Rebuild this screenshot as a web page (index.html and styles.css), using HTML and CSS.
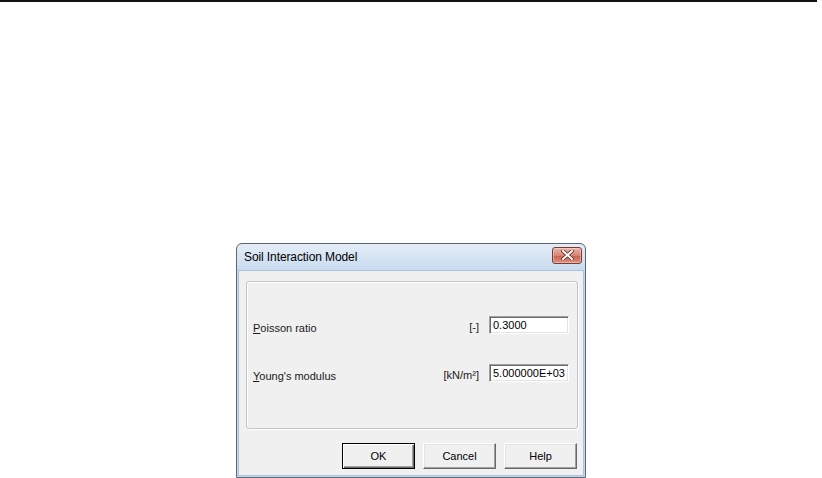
FILE: index.html
```html
<!DOCTYPE html>
<html lang="en">
<head>
    <meta charset="UTF-8">
    <title>Soil Interaction Model</title>
    <link rel="stylesheet" href="styles.css">
</head>
<body>

<div class="top-rule"></div>

<!-- Dialog window -->
<div class="dialog">
    <div class="title-bar">
        <span class="title">Soil Interaction Model</span>
        <button class="close-btn" title="Close">
            <svg width="13" height="10" viewBox="0 0 13 10">
                <path d="M2 1 L11 9 M11 1 L2 9" stroke="#5a2018" stroke-width="3.4" stroke-linecap="square"/>
                <path d="M2 1 L11 9 M11 1 L2 9" stroke="#fff" stroke-width="2" stroke-linecap="square"/>
            </svg>
        </button>
    </div>

    <div class="client">
        <div class="group-box">
            <div class="field-row">
                <label class="field-label" for="poisson"><u>P</u>oisson ratio</label>
                <span class="unit">[-]</span>
                <input class="field-input" type="text" id="poisson" value="0.3000">
            </div>
            <div class="field-row">
                <label class="field-label" for="young"><u>Y</u>oung's modulus</label>
                <span class="unit">[kN/m²]</span>
                <input class="field-input" type="text" id="young" value="5.000000E+03">
            </div>
        </div>

        <div class="button-row">
            <button class="btn btn-default">OK</button>
            <button class="btn">Cancel</button>
            <button class="btn">Help</button>
        </div>
    </div>
</div>

</body>
</html>
```

FILE: styles.css
```css
body {
    margin: 0;
    background-color: #fff;
    font-family: "Liberation Sans", Arial, sans-serif;
    font-size: 11px;
    color: #000;
}

.top-rule {
    width: 817px;
    height: 2px;
    background-color: #111;
}

/* Window frame */
.dialog {
    margin: 241px 0 0 236px;
    width: 346px;
    border: 1px solid #5d6772;
    border-radius: 6px 6px 0 0;
    padding: 0 1px 1px;
    background: linear-gradient(#e3edf8, #c6d8ee 30px, #c6d8ee);
}

.title-bar {
    height: 26px;
    display: flex;
    align-items: center;
    justify-content: space-between;
    padding: 0 2px 0 6px;
}

.title {
    font-size: 12px;
    letter-spacing: -0.1px;
    color: #000;
    margin-top: -1px;
}

.close-btn {
    width: 30px;
    height: 17px;
    margin-top: -4px;
    padding: 0;
    border: 1px solid #7a3a30;
    border-radius: 3px;
    background: linear-gradient(#eab3a7, #d68373 50%, #c9604b 51%, #dc9282);
    box-shadow: inset 0 0 0 1px rgba(255, 255, 255, 0.35);
    display: flex;
    align-items: center;
    justify-content: center;
}

/* Client area */
.client {
    background-color: #f0f0f0;
    border: 1px solid #a9c2de;
    padding: 10px 5px 6px 7px;
}

.group-box {
    border: 1px solid #c4c4c4;
    border-radius: 3px;
    box-shadow: 1px 1px 0 #fff, inset 1px 1px 0 #fff;
    padding: 34px 8px 46px 6px;
    display: flex;
    flex-direction: column;
    gap: 30px;
}

.field-row {
    display: flex;
    align-items: center;
    height: 18px;
}

.field-label {
    flex: 1;
    padding-top: 6px;
    color: #1a1a1a;
}

.unit {
    margin-right: 10px;
    padding-top: 4px;
    color: #1a1a1a;
}

.field-input {
    width: 80px;
    height: 18px;
    box-sizing: border-box;
    padding: 0 0 0 3px;
    font-family: "Liberation Sans", Arial, sans-serif;
    font-size: 11px;
    color: #000;
    background-color: #fff;
    border: 1px solid;
    border-color: #a0a0a0 #fff #fff #a0a0a0;
    box-shadow: inset 1px 1px 0 #696969, inset -1px -1px 0 #e3e3e3;
    outline: none;
}

/* Buttons */
.button-row {
    display: flex;
    justify-content: flex-end;
    gap: 8px;
    margin-top: 14px;
    padding-right: 1px;
}

.btn {
    width: 73px;
    height: 26px;
    padding: 0;
    font-family: "Liberation Sans", Arial, sans-serif;
    font-size: 11px;
    color: #000;
    background-color: #f0f0f0;
    border: 1px solid;
    border-color: #fff #696969 #696969 #fff;
    box-shadow: inset -1px -1px 0 #a0a0a0, inset 1px 1px 0 #e3e3e3;
}

.btn-default {
    border: 1px solid #000;
    box-shadow: inset 1px 1px 0 #fff, inset -1px -1px 0 #696969, inset -2px -2px 0 #a0a0a0;
}
```
